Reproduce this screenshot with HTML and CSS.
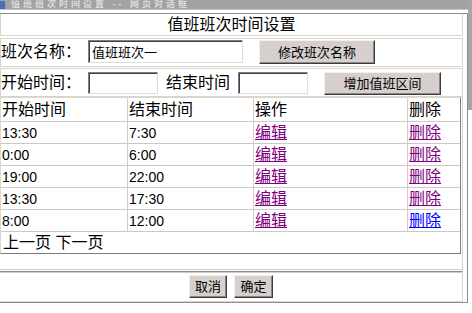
FILE: index.html
```
<!DOCTYPE html>
<html lang="zh-CN">
<head>
<meta charset="utf-8">
<title>值班班次时间设置</title>
<link rel="stylesheet" href="styles.css">
</head>
<body>
<div class="screen">
  <div class="main">
    <div class="titlebar"><span class="ticon"></span><span class="ttext">值班班次时间设置 -- 网页对话框</span></div>
    <div class="dialog">
      <div class="row caption">值班班次时间设置</div>
      <div class="row form-row r2">
        <span class="label">班次名称：</span>
        <input class="field field-name" value="值班班次一">
        <button class="btn btn-rename">修改班次名称</button>
      </div>
      <div class="row form-row r3">
        <span class="label">开始时间：</span>
        <input class="field field-short">
        <span class="label label-end">结束时间</span>
        <input class="field field-short">
        <button class="btn btn-add">增加值班区间</button>
      </div>
      <div class="row list-cell">
        <table class="grid">
          <colgroup><col class="c1"><col class="c2"><col class="c3"><col class="c4"></colgroup>
          <tr class="head"><td>开始时间</td><td>结束时间</td><td>操作</td><td>删除</td></tr>
          <tr><td class="time">13:30</td><td class="time">7:30</td><td><a class="lk visited">编辑</a></td><td><a class="lk visited">删除</a></td></tr>
          <tr><td class="time">0:00</td><td class="time">6:00</td><td><a class="lk visited">编辑</a></td><td><a class="lk visited">删除</a></td></tr>
          <tr><td class="time">19:00</td><td class="time">22:00</td><td><a class="lk visited">编辑</a></td><td><a class="lk visited">删除</a></td></tr>
          <tr><td class="time">13:30</td><td class="time">17:30</td><td><a class="lk visited">编辑</a></td><td><a class="lk visited">删除</a></td></tr>
          <tr><td class="time">8:00</td><td class="time">12:00</td><td><a class="lk visited">编辑</a></td><td><a class="lk fresh">删除</a></td></tr>
          <tr class="pager"><td colspan="4">上一页 下一页</td></tr>
        </table>
      </div>
      <div class="row actions">
        <button class="btn btn-cancel">取消</button>
        <button class="btn btn-ok">确定</button>
      </div>
    </div>
  </div>
  <div class="frame-strip"></div>
</div>
</body>
</html>
```
FILE: styles.css
```
* { box-sizing: border-box; }
body {
  margin: 0;
  background: #fff;
  color: #000;
  font-family: "Liberation Sans", "Noto Sans CJK SC", sans-serif;
  font-size: 16px;
}
.screen {
  display: flex;
  align-items: flex-start;
  width: 472px;
  height: 313px;
  overflow: hidden;
}
.main { width: 468px; flex: none; }
.frame-strip {
  width: 4px;
  height: 110px;
  background: #a6a6a6;
  flex: none;
}
.titlebar {
  height: 10px;
  background: #a2a2a2;
  border-bottom: 1px solid #c4c4c4;
  display: flex;
  align-items: center;
}
.ticon {
  width: 5px;
  height: 8px;
  background: #4a6fb8;
  flex: none;
}
.ttext {
  margin-left: 6px;
  font-size: 9px;
  line-height: 9px;
  font-weight: bold;
  letter-spacing: 3px;
  color: #dcdcdc;
  white-space: nowrap;
}
.dialog {
  margin-top: 3px;
  width: 468px;
  border-top: 1px solid #8c8c8c;
  border-right: 1px solid #8c8c8c;
  border-bottom: 1px solid #8c8c8c;
  padding-right: 4px;
}
.row {
  width: 463px;
  border: 1px solid #d8d4c8;
}
.caption {
  height: 22px;
  border-top: none;
  text-align: center;
  line-height: 21px;
}
.form-row {
  display: flex;
  align-items: flex-start;
  height: 29px;
}
.r2 { margin-top: 2px; padding-top: 1px; }
.r3 { margin-top: 1px; padding-top: 3px; }
.label {
  width: 87px;
  flex: none;
  line-height: 23px;
  white-space: nowrap;
}
.r3 .label { line-height: 22px; }
.label-end { width: 72px; margin-left: 8px; }
.field {
  flex: none;
  border: 1px solid;
  border-color: #808080 #e2ddd0 #e2ddd0 #808080;
  box-shadow: inset 1px 1px 0 #404040;
  background: #fff;
  font-family: "Liberation Sans", "Noto Sans CJK SC", sans-serif;
  font-size: 13px;
  padding: 0 2px 0 3px;
  color: #000;
  outline: none;
}
.field-name { width: 155px; height: 23px; margin-right: 16px; }
.field-short { width: 70px; height: 22px; }
.r3 .field-short:last-of-type { margin-right: 16px; }
.btn {
  flex: none;
  font-family: "Liberation Sans", "Noto Sans CJK SC", sans-serif;
  font-size: 13px;
  color: #000;
  background: #d6cfcc;
  border: 1px solid;
  border-color: #f4f0ec #3c3c3c #3c3c3c #f4f0ec;
  box-shadow: inset -1px -1px 0 #888;
  padding: 0;
  line-height: 1;
}
.btn-rename { width: 116px; height: 24px; }
.btn-add { width: 117px; height: 23px; }
.list-cell {
  margin-top: 0;
  height: 173px;
  border-top: none;
  border-left: none;
  border-bottom-color: #cfcfcf;
}
.grid {
  table-layout: fixed;
  width: 461px;
  border-collapse: separate;
  border-spacing: 0;
  border-top: 1px solid #dcd8cc;
  border-left: 1px solid #dcd8cc;
  border-right: 1px solid #7c7c7c;
  border-bottom: 1px solid #7c7c7c;
}
.c1 { width: 126px; }
.c2 { width: 126px; }
.c3 { width: 154px; }
.c4 { width: 53px; }
.grid td {
  padding: 0 0 0 1px;
  height: 22px;
  border-bottom: 1px solid #c8c8c8;
  vertical-align: middle;
  font-size: 16px;
  line-height: 18px;
  white-space: nowrap;
}
.grid td + td { border-left: 1px solid #dcc8c8; }
.grid .head td { height: 24px; }
.grid td.time { font-size: 14px; }
.grid .pager td {
  height: 21px;
  border-bottom: none;
  padding-left: 2px;
}
.lk { text-decoration: underline; cursor: pointer; }
.visited { color: #800080; }
.fresh { color: #0000ff; }
.actions {
  margin-top: 1px;
  height: 31px;
  border-left: none;
  border-top-color: #8c8c8c;
  box-shadow: inset 0 1px 0 #cccccc;
  border-bottom-color: #e0d4d0;
  display: flex;
  justify-content: center;
  align-items: flex-start;
  padding-top: 3px;
  gap: 7px;
}
.btn-cancel { width: 38px; height: 23px; }
.btn-ok { width: 39px; height: 23px; }
```
